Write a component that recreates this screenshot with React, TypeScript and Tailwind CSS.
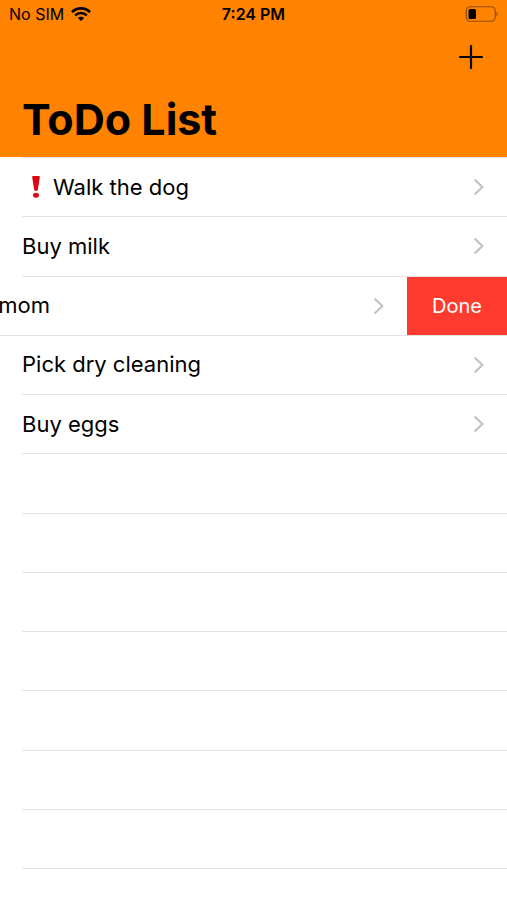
import { useState } from "react";
import clsx from "clsx";

interface TodoItem {
  id: number;
  title: string;
  important?: boolean;
}

const initialItems: TodoItem[] = [
  { id: 1, title: "Walk the dog", important: true },
  { id: 2, title: "Buy milk" },
  { id: 3, title: "Call mom", important: true },
  { id: 4, title: "Pick dry cleaning" },
  { id: 5, title: "Buy eggs" },
];

const TOTAL_ROWS = 12;

function WifiIcon() {
  return (
    <svg className="w-5 h-[14px]" viewBox="0 0 20 14" aria-hidden="true">
      <g fill="none" stroke="#000" strokeWidth="2.7">
        <path d="M1 5.1C6 .1 14 .1 19 5.1" />
        <path d="M4.2 8.4c3.3-3.2 8.3-3.2 11.6 0" />
      </g>
      <path d="M10 13.9 6.9 10.9c1.8-1.7 4.4-1.7 6.2 0z" />
    </svg>
  );
}

function BatteryIcon() {
  return (
    <svg className="w-[33px] h-4" viewBox="0 0 33 16" aria-hidden="true">
      <rect
        x="1.25"
        y=".75"
        width="29"
        height="14.5"
        rx="4"
        fill="none"
        stroke="#000"
        strokeOpacity=".42"
        strokeWidth="1.2"
      />
      <rect x="3.5" y="3" width="7.5" height="10" rx="1.5" />
      <path d="M31.5 5.8c1.7.7 1.7 3.7 0 4.4z" fillOpacity=".42" />
    </svg>
  );
}

function PlusIcon() {
  return (
    <svg className="w-6 h-6" viewBox="0 0 24 24" aria-hidden="true">
      <path
        d="M12 1v22M1 12h22"
        fill="none"
        stroke="#000"
        strokeWidth="2.2"
        strokeLinecap="round"
      />
    </svg>
  );
}

function ChevronIcon() {
  return (
    <svg className="w-[10px] h-4 shrink-0" viewBox="0 0 10 16" aria-hidden="true">
      <path
        d="M1.3 1.2 8.4 8l-7.1 6.8"
        fill="none"
        stroke="#c2c2c5"
        strokeWidth="2.2"
        strokeLinecap="round"
        strokeLinejoin="round"
      />
    </svg>
  );
}

function ImportantIcon() {
  return (
    <svg
      className="w-[31px] h-6 shrink-0"
      viewBox="0 0 31 24"
      role="img"
      aria-label="Important"
    >
      <path
        d="M10.2 2.2c0-.7.4-1.1 1.1-1.1h5.4c.7 0 1.1.4 1.1 1.1l-1.9 12.3c-.1.9-.7 1.4-1.9 1.4s-1.8-.5-1.9-1.4z"
        fill="#dd0714"
      />
      <ellipse cx="14" cy="20.2" rx="3" ry="2.5" fill="#dd0714" />
    </svg>
  );
}

export default function App() {
  const [items, setItems] = useState(initialItems);
  const [swipedId, setSwipedId] = useState(3);

  const handleDone = (id: number) => {
    setItems(items.filter((item) => item.id !== id));
    setSwipedId(0);
  };

  const handleAdd = () => {
    setItems([...items, { id: Date.now(), title: "New item" }]);
  };

  const emptyRows = Math.max(TOTAL_ROWS - items.length, 0);

  return (
    <div className="min-h-screen w-full flex flex-col overflow-hidden bg-white text-black font-['Inter','Liberation_Sans',sans-serif]">
      <header className="bg-[#ff8200] pb-1">
        <div className="grid grid-cols-3 items-center h-7 px-[9px]">
          <div className="flex items-center gap-[7px] text-base">
            <span>No SIM</span>
            <WifiIcon />
          </div>
          <span className="text-base font-semibold text-center">7:24 PM</span>
          <div className="flex justify-end">
            <BatteryIcon />
          </div>
        </div>
        <div className="flex justify-end items-center h-[58px] px-6">
          <button type="button" aria-label="Add item" onClick={handleAdd}>
            <PlusIcon />
          </button>
        </div>
        <h1 className="px-[22px] text-[43px] leading-[67px] font-bold">
          ToDo List
        </h1>
      </header>
      <main className="flex-1 flex flex-col">
        <div className="ml-[22px] h-px bg-[#e2e2e2]" />
        <ul className="grow flex flex-col">
          {items.map((item) => {
            const swiped = item.id === swipedId;
            return (
              <li
                key={item.id}
                className={clsx(
                  "grow shrink-0 basis-14 flex",
                  swiped ? "border-b border-[#e2e2e2]" : "pl-[22px]"
                )}
              >
                <a
                  href="#"
                  className={clsx(
                    "w-full shrink-0 flex justify-between items-center pr-[23px] text-[22px]",
                    swiped ? "-ml-25 pl-[22px]" : "border-b border-[#e2e2e2]"
                  )}
                >
                  <span className="flex items-center">
                    {item.important && <ImportantIcon />}
                    {item.title}
                  </span>
                  <ChevronIcon />
                </a>
                {swiped && (
                  <button
                    type="button"
                    onClick={() => handleDone(item.id)}
                    className="w-25 shrink-0 bg-[#ff3b30] text-white text-xl"
                  >
                    Done
                  </button>
                )}
              </li>
            );
          })}
          {Array.from({ length: emptyRows }, (_, index) => (
            <li key={index} className="grow shrink-0 basis-14 flex pl-[22px]">
              <div className="w-full border-b border-[#e2e2e2]" />
            </li>
          ))}
        </ul>
        <div className="h-[31px]" />
      </main>
    </div>
  );
}
